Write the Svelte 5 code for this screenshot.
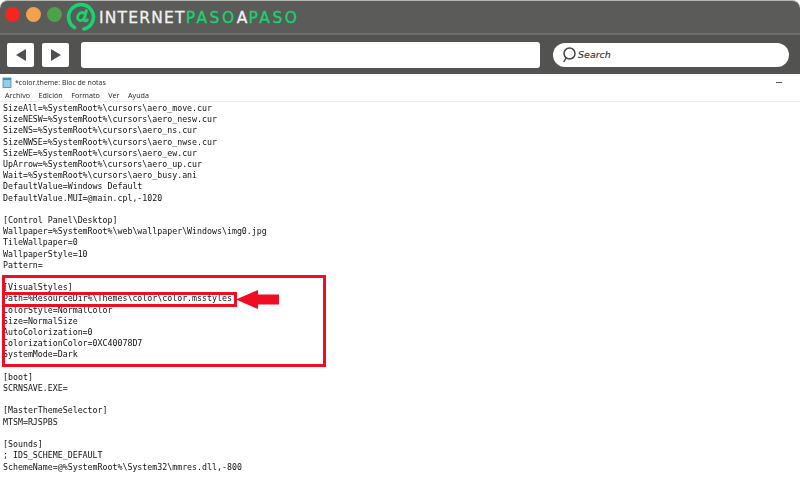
<script>
  const lines = [
    'SizeAll=%SystemRoot%\\cursors\\aero_move.cur',
    'SizeNESW=%SystemRoot%\\cursors\\aero_nesw.cur',
    'SizeNS=%SystemRoot%\\cursors\\aero_ns.cur',
    'SizeNWSE=%SystemRoot%\\cursors\\aero_nwse.cur',
    'SizeWE=%SystemRoot%\\cursors\\aero_ew.cur',
    'UpArrow=%SystemRoot%\\cursors\\aero_up.cur',
    'Wait=%SystemRoot%\\cursors\\aero_busy.ani',
    'DefaultValue=Windows Default',
    'DefaultValue.MUI=@main.cpl,-1020',
    '',
    '[Control Panel\\Desktop]',
    'Wallpaper=%SystemRoot%\\web\\wallpaper\\Windows\\img0.jpg',
    'TileWallpaper=0',
    'WallpaperStyle=10',
    'Pattern=',
    '',
    '[VisualStyles]',
    'Path=%ResourceDir%\\Themes\\color\\color.msstyles',
    'ColorStyle=NormalColor',
    'Size=NormalSize',
    'AutoColorization=0',
    'ColorizationColor=0XC40078D7',
    'SystemMode=Dark',
    '',
    '[boot]',
    'SCRNSAVE.EXE=',
    '',
    '[MasterThemeSelector]',
    'MTSM=RJSPBS',
    '',
    '[Sounds]',
    '; IDS_SCHEME_DEFAULT',
    'SchemeName=@%SystemRoot%\\System32\\mmres.dll,-800'
  ];
  const menu = ['Archivo', 'Edición', 'Formato', 'Ver', 'Ayuda'];
</script>

<div class="page">
  <header class="titlebar">
    <span class="dot red"></span>
    <span class="dot orange"></span>
    <span class="dot green"></span>
    <svg class="logo" width="30" height="30" viewBox="0 0 30 30" fill="none">
      <path d="M8.500 25.500A12.400 12.400 0 1 1 18 27" stroke="#14d56f" stroke-width="3.600" stroke-linecap="round" />
      <path d="M20.500 8.500 18 17c-.5 2 2 2.600 3.400.8M19.500 12.500c-1.400-2.800-5.200-2.600-7 .2-1.800 3-.6 5.800 1.800 5.800 2 0 3.600-1.400 4.600-3.500" stroke="#14d56f" stroke-width="2.800" stroke-linecap="round" />
    </svg>
    <span class="brand">INTERNET<em>PASO</em>A<em>PASO</em></span>
  </header>

  <div class="toolbar">
    <button class="nav" aria-label="Atrás"><span class="tri left"></span></button>
    <button class="nav" aria-label="Adelante"><span class="tri right"></span></button>
    <div class="address"></div>
    <div class="search">
      <svg width="15" height="16" viewBox="0 0 15 16" fill="none" stroke="#444444" stroke-width="1.500">
        <circle cx="8.500" cy="6.500" r="5.500" />
        <path d="M5 11 2.800 15" />
      </svg>
      <span>Search</span>
    </div>
  </div>

  <section class="notepad">
    <div class="wintitle">
      <svg width="10" height="11" viewBox="0 0 10 11">
        <rect x="1" y="1" width="8" height="9.500" fill="#8fd0e8" stroke="#4b8aa0" stroke-width="0.800" />
        <rect x="1" y="1" width="8" height="2" fill="#3f8fb0" />
      </svg>
      <span class="wintext">*color.theme: Bloc de notas</span>
      <span class="minimize"></span>
    </div>
    <nav class="menubar">
      {#each menu as item}
        <span>{item}</span>
      {/each}
    </nav>
    <pre class="text">{lines.join('\n')}</pre>
  </section>

  <div class="box big"></div>
  <div class="box small"></div>
  <svg class="arrow" width="44" height="21" viewBox="0 0 44 21">
    <path d="M0 10.500 22 1V5.500H43V15.500H22V20Z" fill="#ee0d22" />
  </svg>
</div>

<style>
  :global(body) {
    background: #ffffff;
  }

  .page {
    position: relative;
    width: 800px;
    height: 500px;
    overflow: hidden;
    background: #ffffff;
    font-family: "Open Sans", "Liberation Sans", sans-serif;
  }

  .titlebar {
    display: flex;
    align-items: center;
    height: 32px;
    padding: 0 0 0 5px;
    background: #5b5b59;
    border-top: 1px solid #b5b5b2;
    border-radius: 8px 8px 0 0;
    box-sizing: content-box;
  }

  .dot {
    width: 15px;
    height: 15px;
    margin-right: 6px;
    margin-bottom: 5px;
    border-radius: 50%;
  }

  .red {
    background: #f5261f;
  }

  .orange {
    background: #f0a24f;
  }

  .green {
    margin-right: 4px;
    background: #4ba24c;
  }

  .logo {
    flex: none;
  }

  .brand {
    margin: 3px 0 0 3px;
    font-family: "DejaVu Sans", sans-serif;
    font-size: 15.5px;
    line-height: 1;
    letter-spacing: 1.2px;
    white-space: nowrap;
    color: #f2f2f2;
    -webkit-text-stroke: 0.3px currentColor;
  }

  .brand em {
    font-style: normal;
    letter-spacing: 2.5px;
    color: #14d56f;
  }

  .toolbar {
    display: flex;
    align-items: center;
    height: 41px;
    padding-left: 7px;
    background: #525250;
    border-top: 2px solid #6d6d6b;
    box-sizing: border-box;
  }

  .nav {
    display: flex;
    align-items: center;
    justify-content: center;
    width: 27px;
    height: 24px;
    margin-right: 8px;
    padding: 0;
    border: none;
    border-radius: 2px;
    background: #ffffff;
  }

  .nav + .nav {
    margin-right: 12px;
  }

  .tri {
    width: 0;
    height: 0;
    border-top: 6px solid transparent;
    border-bottom: 6px solid transparent;
  }

  .left {
    border-right: 10px solid #4f4f4f;
  }

  .right {
    border-left: 10px solid #4f4f4f;
  }

  .address {
    width: 459px;
    height: 26px;
    margin-right: 13px;
    border-radius: 3px;
    background: #ffffff;
  }

  .search {
    display: flex;
    align-items: center;
    gap: 2px;
    width: 236px;
    height: 24px;
    padding-left: 8px;
    border-radius: 12px;
    background: #ffffff;
    box-sizing: border-box;
    font-family: "DejaVu Sans", sans-serif;
    font-size: 9.5px;
    font-style: italic;
    color: #333333;
    -webkit-text-stroke: 0.15px currentColor;
  }

  .notepad {
    filter: blur(0.3px);
  }

  .wintitle {
    display: flex;
    align-items: center;
    height: 16px;
    padding-left: 2px;
    font-size: 7px;
    color: #222222;
  }

  .wintext {
    margin-left: 3px;
  }

  .minimize {
    width: 6px;
    height: 1px;
    margin-left: auto;
    margin-right: 18px;
    background: #555555;
  }

  .menubar {
    display: flex;
    gap: 8.500px;
    height: 11px;
    padding-left: 5px;
    border-bottom: 1px solid #ececec;
    font-size: 7.200px;
    line-height: 11px;
    color: #222222;
  }

  .text {
    margin: 1px 0 0 3px;
    font-family: "DejaVu Sans Mono", monospace;
    font-size: 8.270px;
    line-height: 11.200px;
    color: #111111;
  }

  .box {
    position: absolute;
    border: 3px solid #ee0d22;
    box-sizing: border-box;
  }

  .big {
    left: 2px;
    top: 275px;
    width: 324px;
    height: 92px;
  }

  .small {
    left: 2px;
    top: 292px;
    width: 235px;
    height: 15px;
  }

  .arrow {
    position: absolute;
    left: 236px;
    top: 289px;
  }
</style>
